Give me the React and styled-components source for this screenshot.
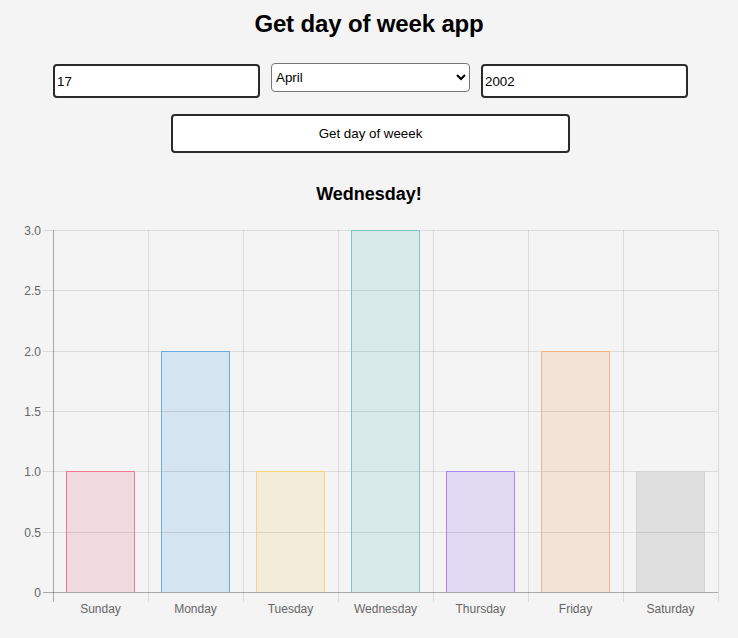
import React, { useState } from 'react'
import styled, { createGlobalStyle } from 'styled-components'

const GlobalStyle = createGlobalStyle`
  body {
    margin: 0;
    background: #f4f4f4;
    font-family: "Liberation Sans", Arial, sans-serif;
  }
`

const Page = styled.div`
  display: flex;
  flex-direction: column;
  align-items: center;
  padding-top: 10px;
`

const Title = styled.h1`
  margin: 0;
  font-size: 24px;
  line-height: 28px;
  font-weight: bold;
  letter-spacing: -0.15px;
  color: #000;
`

const InputRow = styled.div`
  display: flex;
  align-items: flex-start;
  gap: 11px;
  margin-top: 25px;
  margin-left: 3px;
`

const TextInput = styled.input`
  box-sizing: border-box;
  width: 207px;
  height: 34px;
  margin-top: 1px;
  padding: 0 2px;
  border: 2px solid #2a2a2a;
  border-radius: 4px;
  background: #fff;
  font-family: "Liberation Sans", Arial, sans-serif;
  font-size: 13.33px;
  color: #000;
  outline: none;
`

const Select = styled.select`
  box-sizing: border-box;
  width: 199px;
  height: 29px;
  border: 1px solid #767676;
  border-radius: 4px;
  background: #fff;
  font-family: "Liberation Sans", Arial, sans-serif;
  font-size: 13.33px;
  color: #000;
`

const Button = styled.button`
  box-sizing: border-box;
  width: 399px;
  height: 39px;
  margin-top: 16px;
  margin-left: 3px;
  border: 2px solid #2a2a2a;
  border-radius: 4px;
  background: #fff;
  font-family: "Liberation Sans", Arial, sans-serif;
  font-size: 13.33px;
  color: #000;
  cursor: pointer;
`

const Result = styled.h2`
  margin: 30px 0 0;
  font-size: 18px;
  line-height: 22px;
  font-weight: bold;
`

const ChartSvg = styled.svg`
  display: block;
  margin-top: 11px;
`

const months = [
  'January', 'February', 'March', 'April', 'May', 'June',
  'July', 'August', 'September', 'October', 'November', 'December'
]

const days = [
  { name: 'Sunday', value: 1, fill: '#f1dadf', stroke: '#f07892' },
  { name: 'Monday', value: 2, fill: '#d4e4f0', stroke: '#6aa9dd' },
  { name: 'Tuesday', value: 1, fill: '#f4ecdb', stroke: '#f8d47c' },
  { name: 'Wednesday', value: 3, fill: '#d8e9e9', stroke: '#80c3c2' },
  { name: 'Thursday', value: 1, fill: '#e0daf3', stroke: '#a987f6' },
  { name: 'Friday', value: 2, fill: '#f3e3d6', stroke: '#f2b680' },
  { name: 'Saturday', value: 1, fill: '#dfdfdf', stroke: '#d3d3d3' }
]

// chart is drawn in page coordinates, svg starts at y = TOP
const TOP = 216
const LEFT = 53
const RIGHT = 718
const Y0 = 592
const Y3 = 230
const labelFont = 'Liberation Sans, Arial, sans-serif'

const BarChart = ({ data }) => {
  const band = (RIGHT - LEFT) / data.length
  const unit = (Y0 - Y3) / 3
  const ticks = [0, 0.5, 1, 1.5, 2, 2.5, 3]
  const bars = data.map((d, i) => {
    const x0 = LEFT + band * i + band * 0.14
    const xl = Math.round(x0) + 0.5
    const xr = Math.round(x0 + band * 0.72) - 0.5
    const yt = Math.round(Y0 - d.value * unit) + 0.5
    return { ...d, xl, xr, yt, cx: LEFT + band * (i + 0.5) }
  })
  return (
    <ChartSvg width="738" height="410" viewBox={`0 ${TOP} 738 410`}>
      {bars.map(b => (
        <rect key={b.name} x={b.xl - 0.5} y={b.yt - 0.5} width={b.xr - b.xl + 1} height={Y0 - b.yt + 0.5} fill={b.fill} />
      ))}
      {ticks.map(t => {
        const y = Math.round(Y0 - t * unit) + 0.5
        return (
          <g key={t}>
            <line x1={LEFT - 10} x2={RIGHT} y1={y} y2={y} stroke={t === 0 ? 'rgba(0,0,0,0.3)' : 'rgba(0,0,0,0.1)'} />
            <text x={LEFT - 12} y={y + 4} textAnchor="end" fontSize="12" fill="#666" fontFamily={labelFont}>
              {t === 0 ? '0' : t.toFixed(1)}
            </text>
          </g>
        )
      })}
      {data.map((d, i) => {
        const x = Math.round(LEFT + band * i) + 0.5
        return <line key={d.name} x1={x} x2={x} y1={Y3} y2={Y0 + 10} stroke={i === 0 ? 'rgba(0,0,0,0.3)' : 'rgba(0,0,0,0.1)'} />
      })}
      <line x1={RIGHT + 0.5} x2={RIGHT + 0.5} y1={Y3} y2={Y0 + 10} stroke="rgba(0,0,0,0.1)" />
      {bars.map(b => (
        <g key={b.name}>
          <path d={`M${b.xl} ${Y0} V${b.yt} H${b.xr} V${Y0}`} fill="none" stroke={b.stroke} />
          <text x={b.cx} y={613} textAnchor="middle" fontSize="12" fill="#666" fontFamily={labelFont}>
            {b.name}
          </text>
        </g>
      ))}
    </ChartSvg>
  )
}

const App = () => {
  const [day, setDay] = useState('17')
  const [month, setMonth] = useState('April')
  const [year, setYear] = useState('2002')
  return (
    <Page>
      <GlobalStyle />
      <Title>Get day of week app</Title>
      <InputRow>
        <TextInput value={day} onChange={e => setDay(e.target.value)} />
        <Select value={month} onChange={e => setMonth(e.target.value)}>
          {months.map(m => <option key={m}>{m}</option>)}
        </Select>
        <TextInput value={year} onChange={e => setYear(e.target.value)} />
      </InputRow>
      <Button>Get day of weeek</Button>
      <Result>Wednesday!</Result>
      <BarChart data={days} />
    </Page>
  )
}

export default App
